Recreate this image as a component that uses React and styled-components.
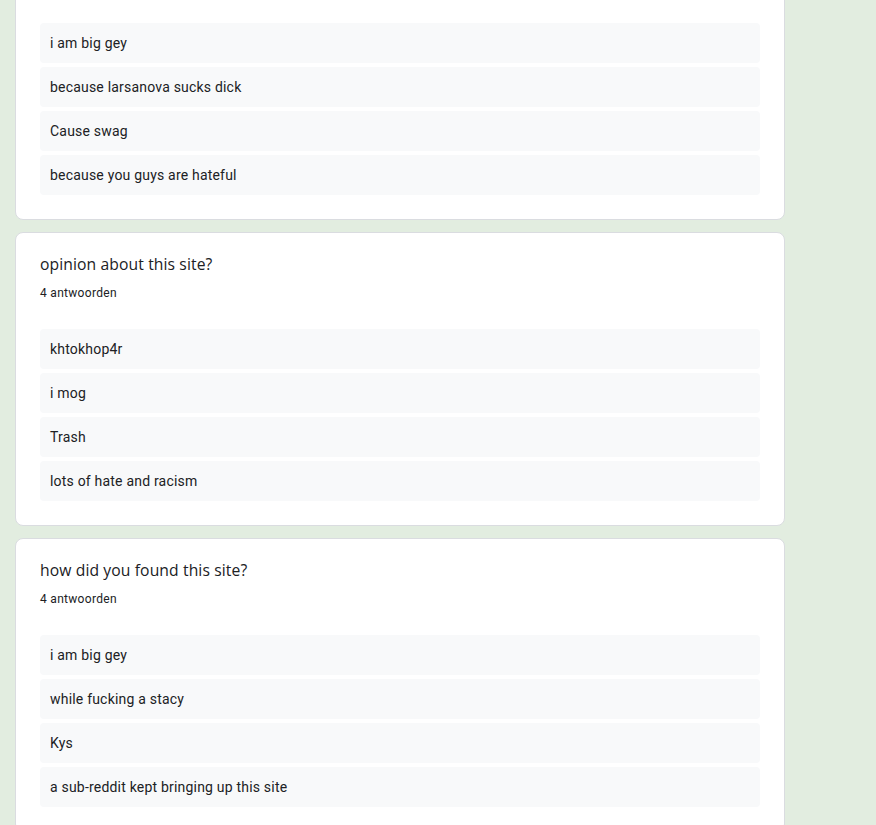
import styled, { createGlobalStyle } from "styled-components";

const GlobalStyle = createGlobalStyle`
  html, body {
    margin: 0;
    padding: 0;
    background: #e2ede0;
    overflow: hidden;
  }
  body {
    font-family: Roboto, "Liberation Sans", Arial, sans-serif;
    color: #202124;
  }
`;

const Page = styled.div`
  width: 770px;
  margin: -74px 0 0 15px;
  display: flex;
  flex-direction: column;
  gap: 12px;
`;

const Card = styled.section`
  background: #fff;
  border: 1px solid #dadce0;
  border-radius: 8px;
  padding: 19px 24px 24px;
`;

const Title = styled.h3`
  margin: 0;
  font-family: "Open Sans", Roboto, sans-serif;
  font-size: 15.7px;
  font-weight: 400;
  line-height: 24px;
  letter-spacing: 0.1px;
  color: #202124;
`;

const Count = styled.div`
  margin-top: 9px;
  font-size: 12px;
  line-height: 16px;
  letter-spacing: 0.3px;
  color: #202124;
`;

const List = styled.div`
  margin-top: 28px;
  display: flex;
  flex-direction: column;
  gap: 4px;
`;

const Answer = styled.div`
  height: 40px;
  display: flex;
  align-items: center;
  padding: 0 10px;
  background: #f8f9fa;
  border-radius: 4px;
  font-size: 14px;
  letter-spacing: 0.2px;
  color: #202124;
`;

const questions = [
  {
    title: "why did you come here?",
    answers: [
      "i am big gey",
      "because larsanova sucks dick",
      "Cause swag",
      "because you guys are hateful",
    ],
  },
  {
    title: "opinion about this site?",
    answers: ["khtokhop4r", "i mog", "Trash", "lots of hate and racism"],
  },
  {
    title: "how did you found this site?",
    answers: [
      "i am big gey",
      "while fucking a stacy",
      "Kys",
      "a sub-reddit kept bringing up this site",
    ],
  },
];

export default function App() {
  return (
    <>
      <GlobalStyle />
      <Page>
        {questions.map((q) => (
          <Card key={q.title}>
            <Title>{q.title}</Title>
            <Count>{q.answers.length} antwoorden</Count>
            <List>
              {q.answers.map((a, i) => (
                <Answer key={i}>{a}</Answer>
              ))}
            </List>
          </Card>
        ))}
      </Page>
    </>
  );
}
